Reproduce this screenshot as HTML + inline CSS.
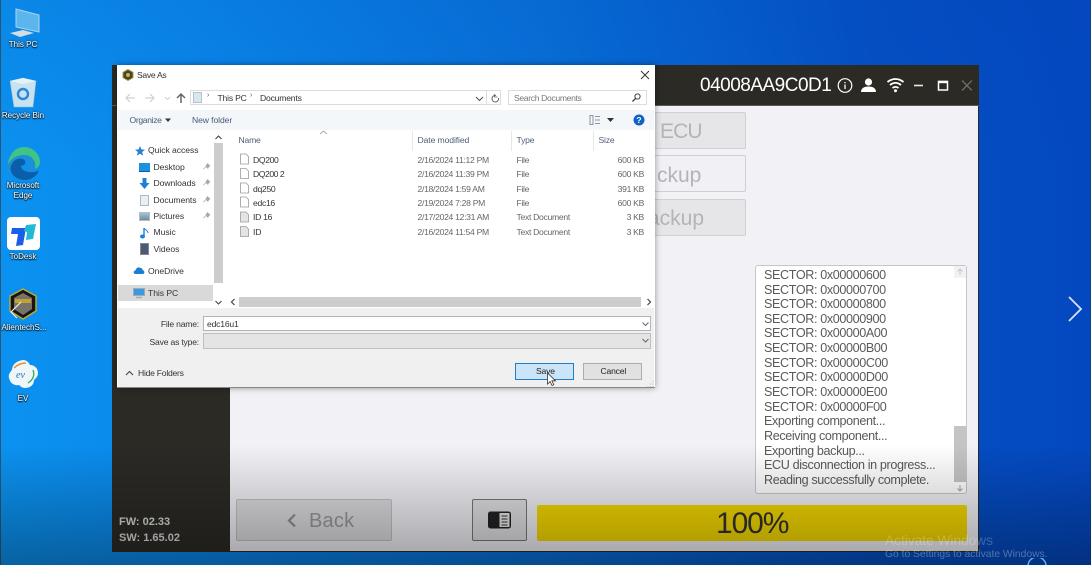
<!DOCTYPE html>
<html><head><meta charset="utf-8">
<style>
html,body{margin:0;padding:0;width:1091px;height:565px;overflow:hidden;background:#0a6ad8}
body{position:relative;font-family:"Liberation Sans",sans-serif}
#w{position:absolute;left:0;top:0;width:1091px;height:565px;overflow:hidden;filter:blur(.35px);background:linear-gradient(90deg,#0b92f0 0%,#0a86ea 20%,#0870d8 50%,#0450c4 80%,#0448c0 100%)}
.a{position:absolute;white-space:nowrap}
.d{font-size:8.6px;color:#444;letter-spacing:-.2px}
.g{color:#666;letter-spacing:-.3px}
.ic{position:absolute;left:0;width:46px;text-align:center;color:#fff;font-size:8px;line-height:10px;text-shadow:0 0 2px #000,0 1px 1px #000}
.l{position:absolute;left:764px;font-size:12.6px;color:#5a5a5a;line-height:14.6px;white-space:nowrap;letter-spacing:-.38px}
.btn{position:absolute;left:600px;width:146px;height:37px;border:1px solid #d0d0d4;border-radius:2px;background:#e6e6e9;color:#b4b4b8;font-size:21px;box-sizing:border-box}
.nav{position:absolute;font-size:8.6px;color:#333;white-space:nowrap;letter-spacing:-.05px}
</style></head><body><div id="w">
<div class="a" style="left:0;top:0;width:1091px;height:565px;background:linear-gradient(180deg,rgba(0,60,170,.12),rgba(0,0,0,0) 30%)"></div>
<div class="a" style="left:0;top:0;width:1px;height:565px;background:rgba(60,50,40,.6)"></div>
<div class="a" style="left:1090px;top:0;width:1px;height:565px;background:rgba(30,60,80,.5)"></div>

<!-- Desktop icons -->
<svg class="a" style="left:5px;top:6px" width="36" height="32" viewBox="0 0 36 32"><path d="M11 3l23 6v17l-23-5z" fill="#5cb6ee" stroke="#a8d4ee" stroke-width="1"/><path d="M5 27l13-3 11 3-14 4z" fill="#d4dce4"/></svg>
<div class="ic" style="top:40px">This PC</div>
<svg class="a" style="left:9px;top:76px" width="28" height="32" viewBox="0 0 28 32"><path d="M1 5l13-3 13 3-3 26H5z" fill="#c8e2f2" stroke="#8fbcd8" stroke-width=".6"/><path d="M1 5l13-3 13 3-13 3z" fill="#e6f2fa"/><circle cx="14" cy="18" r="5" fill="none" stroke="#2d86d8" stroke-width="2.4"/></svg>
<div class="ic" style="top:111px">Recycle Bin</div>
<svg class="a" style="left:6px;top:146px" width="36" height="36" viewBox="0 0 36 36"><path d="M1 18C2 7 10 1 18 1c10 0 16 8 16 15 0 5-4 8-9 8-4 0-6-2-6-4 4-1 5-3 4-5-2-3-8-3-12 1-4 3-6 8-3 13C3 28 0 23 1 18z" fill="#1d8fd6"/><path d="M18 1c10 0 16 8 16 15 0 3-2 6-5 7 2-8-4-15-12-14-6 0-12 4-15 9C3 8 10 1 18 1z" fill="#3fc488"/><path d="M7 16c4-4 10-5 12-1 1 2 0 4-4 5 0 4 5 7 13 6 2-.3 4-1 5-1-3 6-9 9-14 9-7 0-13-4-14-9-1-4 0-6 2-9z" fill="#0b5fa8"/></svg>
<div class="ic" style="top:181px">Microsoft<br>Edge</div>
<div class="a" style="left:7px;top:217px;width:33px;height:33px;background:#fff;border-radius:4px"></div>
<svg class="a" style="left:7px;top:217px" width="33" height="33" viewBox="0 0 33 33"><path d="M5 11h14l-3 17-7 1 2-12H4z" fill="#1a5fe8"/><path d="M19 8l10-1-3 15-7 1 1-8-3-1z" fill="#22b8d6"/></svg>
<div class="ic" style="top:252px">ToDesk</div>
<svg class="a" style="left:8px;top:288px" width="30" height="32" viewBox="0 0 30 32"><path d="M15 1l13 7v15l-13 8-13-8V8z" fill="#161616" stroke="#c9a92c" stroke-width="1.4"/><path d="M15 5l9 5v11l-9 6-9-6V10z" fill="#77736a"/><path d="M7 11h16v4H7z" fill="#c2a42c"/><path d="M13 14L3 24l6 6" fill="none" stroke="#eee" stroke-width="1.2"/></svg>
<div class="ic" style="top:323px;left:1px;color:#fff">AlientechS...</div>
<svg class="a" style="left:7px;top:359px" width="32" height="32" viewBox="0 0 32 32"><path d="M16 1c4 0 6 3 7 5 4 0 8 3 8 8 0 4-3 6-4 7 0 5-4 8-9 8-3 0-5-2-6-3-5 1-9-2-10-7-1-3 1-6 3-8 0-5 4-9 11-10z" fill="#eef6f8"/><path d="M7 9c4-4 9-5 12-5" fill="none" stroke="#e88b2c" stroke-width="1.4"/><path d="M26 11c2 5 0 10-5 13" fill="none" stroke="#38b068" stroke-width="1.4"/><text x="9" y="19" font-size="10" font-style="italic" fill="#2f6fc4" font-family="Liberation Serif,serif">ev</text></svg>
<div class="ic" style="top:394px">EV</div>

<!-- App window -->
<div class="a" style="left:112px;top:65px;width:867px;height:487px;background:#2b2a25"></div>
<div class="a" style="left:230px;top:106px;width:748px;height:445px;background:#f1f1f6"></div>
<div class="a" style="left:112px;top:105px;width:867px;height:1px;background:#5a5a55"></div>

<div class="a" style="left:700px;top:75px;font-size:19px;color:#fff;letter-spacing:-.5px">04008AA9C0D1</div>
<svg class="a" style="left:836px;top:76px" width="136" height="20" viewBox="0 0 136 20">
<circle cx="9" cy="9.500" r="6.800" fill="none" stroke="#fff" stroke-width="1.200"/><path d="M9 8.500v4.500M9 6v1.300" stroke="#fff" stroke-width="1.300"/>
<circle cx="32.500" cy="6" r="3.600" fill="#fff"/><path d="M25 16c0-4 3.500-5.500 7.500-5.500S40 12 40 16z" fill="#fff"/>
<path d="M51.500 6c5-4 11-4 16 0M54 9c3.500-2.800 7.500-2.800 11 0M56.500 12c2-1.500 4-1.500 6 0" fill="none" stroke="#fff" stroke-width="1.800"/><circle cx="59.500" cy="14.800" r="1.500" fill="#fff"/>
<path d="M78 9.500h9" stroke="#e8e8e8" stroke-width="1.600"/>
<rect x="102.500" y="5.500" width="9" height="8.500" fill="none" stroke="#fff" stroke-width="1.500"/><path d="M102 6h10" stroke="#fff" stroke-width="2.400"/>
<path d="M126 4.500l10 10M136 4.500l-10 10" stroke="#6e6e6a" stroke-width="1.300"/>
</svg>

<div class="btn" style="top:112px;background:#e6e6e9"><span class="a" style="left:59px;top:7px;letter-spacing:-.9px">ECU</span></div>
<div class="btn" style="top:155px;background:#f1f1f5"><span class="a" style="left:56px;top:8px">ckup</span></div>
<div class="btn" style="top:199px;background:#e6e6e9"><span class="a" style="left:47px;top:7px">ackup</span></div>

<!-- log -->
<div class="a" style="left:755px;top:265px;width:212px;height:229px;background:#fff;border:1px solid #c6c6ca;border-radius:3px;box-sizing:border-box"></div>
<div class="a" style="left:954px;top:266px;width:12px;height:12px;background:#f2f2f2"></div>
<div class="a" style="left:954px;top:426px;width:12px;height:56px;background:#c4c4c4"></div>
<svg class="a" style="left:956px;top:267px" width="8" height="9"><path d="M4 8V2M1.500 4.500L4 2l2.500 2.500" stroke="#c8c8c8" fill="none"/></svg>
<svg class="a" style="left:956px;top:484px" width="8" height="9"><path d="M4 1v6M1.500 4.500L4 7l2.500-2.500" stroke="#a8a8a8" fill="none"/></svg>
<div class="l" style="top:268px">SECTOR: 0x00000600</div>
<div class="l" style="top:283px">SECTOR: 0x00000700</div>
<div class="l" style="top:297px">SECTOR: 0x00000800</div>
<div class="l" style="top:312px">SECTOR: 0x00000900</div>
<div class="l" style="top:326px">SECTOR: 0x00000A00</div>
<div class="l" style="top:341px">SECTOR: 0x00000B00</div>
<div class="l" style="top:356px">SECTOR: 0x00000C00</div>
<div class="l" style="top:370px">SECTOR: 0x00000D00</div>
<div class="l" style="top:385px">SECTOR: 0x00000E00</div>
<div class="l" style="top:400px">SECTOR: 0x00000F00</div>
<div class="l" style="top:414px">Exporting component...</div>
<div class="l" style="top:429px">Receiving component...</div>
<div class="l" style="top:444px">Exporting backup...</div>
<div class="l" style="top:458px">ECU disconnection in progress...</div>
<div class="l" style="top:473px">Reading successfully complete.</div>

<!-- bottom bar -->
<div class="a" style="left:236px;top:499px;width:156px;height:42px;border:1px solid #c0c0c4;border-radius:2px;background:#dcdce0;box-sizing:border-box"></div>
<svg class="a" style="left:285px;top:512px" width="14" height="18"><path d="M10 2.500L4 8.500l6 6" fill="none" stroke="#8e8e92" stroke-width="2.200"/></svg>
<div class="a" style="left:309px;top:510px;font-size:20px;color:#98989c;letter-spacing:.2px">Back</div>
<div class="a" style="left:472px;top:499px;width:55px;height:42px;border:1px solid #777;border-radius:2px;background:#e0e0e4;box-sizing:border-box"></div>
<svg class="a" style="left:487px;top:510px" width="25" height="20"><rect x="1" y="1.500" width="23" height="17" rx="2.500" fill="#222"/><rect x="12.500" y="3" width="10" height="14" fill="#e8e8e8"/><path d="M14.500 6h6M14.500 9h6M14.500 12h6M14.500 15h6" stroke="#333"/></svg>
<div class="a" style="left:537px;top:505px;width:430px;height:36px;background:#f4d700;border-radius:2px"></div>
<div class="a" style="left:716px;top:505px;font-size:30px;color:#333;line-height:37px;letter-spacing:-1.100px">100%</div>

<div class="a" style="left:119px;top:514px;font-size:11px;font-weight:700;color:#d8d8d8;line-height:16px">FW: 02.33<br>SW: 1.65.02</div>

<!-- bottom video shade -->
<div class="a" style="left:0;top:445px;width:1091px;height:120px;background:linear-gradient(180deg,rgba(0,0,0,0) 0%,rgba(0,0,0,.33) 100%)"></div>

<div class="a" style="left:885px;top:533px;font-size:13.700px;color:#fff;opacity:.22">Activate Windows</div>
<div class="a" style="left:885px;top:549px;font-size:10.300px;color:#fff;opacity:.3">Go to Settings to activate Windows.</div>
<svg class="a" style="left:1026px;top:558px" width="22" height="7"><path d="M2 8a9 9 0 0 1 18 0" fill="none" stroke="#5ab4f4" stroke-width="1.500"/></svg>
<svg class="a" style="left:1066px;top:294px" width="18" height="30"><path d="M3 3l12 12L3 27" fill="none" stroke="#d8e2f4" stroke-width="1.800"/></svg>

<!-- Dialog -->
<div class="a" style="left:117px;top:65px;width:538px;height:323px;background:#fff;box-shadow:0 0 6px rgba(0,0,0,.4);border-bottom:1px solid #888;box-sizing:border-box"></div>
<svg class="a" style="left:122px;top:69px" width="12" height="12"><path d="M6 .5l5 2.800v5.400L6 11.500 1 8.700V3.300z" fill="#4a4420" stroke="#a8984c"/><circle cx="6" cy="6" r="2" fill="#c4b25c"/></svg>
<div class="a d" style="left:137px;top:70px;color:#333;letter-spacing:-.3px">Save As</div>
<svg class="a" style="left:640px;top:70px" width="10" height="10"><path d="M1 1l8 8M9 1l-8 8" stroke="#333" stroke-width="1"/></svg>

<svg class="a" style="left:124px;top:91px" width="66" height="14"><path d="M2 7h9M6 3L2 7l4 4M21 7h9M26 3l4 4-4 4" fill="none" stroke="#d0d0d0" stroke-width="1.200"/><path d="M41 6l2.500 2.500L46 6" fill="none" stroke="#d0d0d0"/><path d="M57 12V3M53 7l4-4 4 4" fill="none" stroke="#666" stroke-width="1.500"/></svg>
<div class="a" style="left:190px;top:90px;width:311px;height:15px;border:1px solid #dcdcdc;box-sizing:border-box"></div>
<div class="a" style="left:486px;top:90px;width:15px;height:15px;border-left:1px solid #dcdcdc;box-sizing:border-box"></div>
<div class="a" style="left:193px;top:92px;width:9px;height:11px;background:#d8e6f0;border:1px solid #b8c0c8;box-sizing:border-box"></div>
<div class="a d" style="left:207px;top:92px;color:#555;font-size:7px">›</div>
<div class="a d" style="left:217.500px;top:92.500px;color:#333">This PC</div>
<div class="a d" style="left:250px;top:92px;color:#555;font-size:7px">›</div>
<div class="a d" style="left:260px;top:92.500px;color:#333">Documents</div>
<svg class="a" style="left:474px;top:94px" width="28" height="9"><path d="M2 3l3.500 3.500L9 3" fill="none" stroke="#555" stroke-width="1.100"/><path d="M22 1.500a3.300 3.300 0 1 0 2.500 2.500" fill="none" stroke="#666"/><path d="M20.500 0v3h3" fill="none" stroke="#666" stroke-width=".8"/></svg>
<div class="a" style="left:508px;top:90px;width:139px;height:15px;border:1px solid #dcdcdc;box-sizing:border-box"></div>
<div class="a d" style="left:514px;top:92.500px;color:#777;letter-spacing:-.35px">Search Documents</div>
<svg class="a" style="left:631px;top:92px" width="11" height="11"><circle cx="6.500" cy="4.500" r="2.600" fill="none" stroke="#444"/><path d="M4.500 6.500L1.500 9.500" stroke="#444" stroke-width="1.300"/></svg>

<div class="a" style="left:118px;top:110px;width:536px;height:20px;background:#f4f7fa"></div>
<div class="a d" style="left:129.500px;top:115px;color:#455a78;letter-spacing:-.35px">Organize</div>
<svg class="a" style="left:165px;top:118px" width="7" height="5"><path d="M0 .500h6L3 4z" fill="#333"/></svg>
<div class="a d" style="left:192px;top:115px;color:#455a78;letter-spacing:-.1px">New folder</div>
<svg class="a" style="left:589px;top:115px" width="26" height="10"><path d="M1 .500h3v9H1zM6 1.500h5M6 5h5M6 8.500h5" fill="none" stroke="#8a96a4"/><path d="M18 3h7l-3.500 4z" fill="#333"/></svg>
<svg class="a" style="left:633px;top:114px" width="12" height="12"><circle cx="6" cy="6" r="5.500" fill="#0e63c4"/><text x="6" y="9" font-size="8.500" font-weight="700" fill="#fff" text-anchor="middle" font-family="Liberation Sans,sans-serif">?</text></svg>

<!-- Nav pane -->
<div class="a" style="left:213px;top:131px;width:11px;height:180px;background:#fff"></div>
<div class="a" style="left:214px;top:143px;width:9px;height:140px;background:#cdcdcd"></div>
<svg class="a" style="left:214px;top:134px" width="9" height="8"><path d="M1.500 5L4.500 2l3 3" fill="none" stroke="#444" stroke-width="1.100"/></svg>
<svg class="a" style="left:214px;top:298px" width="9" height="8"><path d="M1.500 3l3 3 3-3" fill="none" stroke="#444" stroke-width="1.100"/></svg>
<div class="a" style="left:118px;top:285px;width:95px;height:16px;background:#d9d9d9"></div>

<svg class="a" style="left:135px;top:146px" width="10" height="10"><path d="M5 0l1.400 3.400L10 3.700 7.200 6l.9 3.600L5 7.700 1.900 9.600 2.800 6 0 3.700l3.600-.3z" fill="#2b7fd4"/></svg>
<div class="nav" style="left:148px;top:145px">Quick access</div>
<div class="a" style="left:139px;top:163px;width:11px;height:8px;background:#1d8fe0;border-bottom:1px solid #0b5fa8"></div>
<div class="nav" style="left:153.500px;top:162px">Desktop</div>
<svg class="a" style="left:139px;top:178px" width="11" height="11"><path d="M3.500 0h4v5h3L5.500 11 .5 5h3z" fill="#1d7fd8"/></svg>
<div class="nav" style="left:153.500px;top:178px">Downloads</div>
<div class="a" style="left:140px;top:195px;width:9px;height:11px;background:#e8f0f6;border:1px solid #b0b8c0;box-sizing:border-box"></div>
<div class="nav" style="left:153.500px;top:195px">Documents</div>
<div class="a" style="left:139px;top:212px;width:11px;height:9px;background:linear-gradient(#9cc4de,#6f8ca0);border:1px solid #bbb;box-sizing:border-box"></div>
<div class="nav" style="left:153.500px;top:211px">Pictures</div>
<svg class="a" style="left:140px;top:227px" width="9" height="12"><path d="M4 1v8" stroke="#1d7fd8" stroke-width="1.400"/><path d="M4 1c1 2 4 2 4 5" fill="none" stroke="#1d7fd8"/><ellipse cx="2.500" cy="9.500" rx="2.500" ry="2" fill="#1d7fd8"/></svg>
<div class="nav" style="left:153.500px;top:227px">Music</div>
<div class="a" style="left:140px;top:243px;width:9px;height:12px;background:#4a5a78;border:1px solid #888;box-sizing:border-box"></div>
<div class="nav" style="left:153.500px;top:244px">Videos</div>
<svg class="a" style="left:133px;top:266px" width="12" height="8"><path d="M2.500 8C0 8 0 4.500 2.500 4.500 3 2 5.500.5 7.500 2c1.500 0 2 1 2 2C12 4.500 12 8 9.500 8z" fill="#1a7fd0"/></svg>
<div class="nav" style="left:148px;top:266px">OneDrive</div>
<svg class="a" style="left:133px;top:288px" width="12" height="11"><rect x=".5" y=".5" width="11" height="7" fill="#3a9ae0" stroke="#9ab"/><path d="M3 9.500h6" stroke="#aaa" stroke-width="1.500"/></svg>
<div class="nav" style="left:148px;top:288px">This PC</div>
<svg class="a" style="left:203px;top:163px" width="9" height="64"><g fill="#aaa"><path d="M4.500 0l3 3-1.500 1L5 6 3 4 .5 6.500 0 6l2.500-2.500L3 2z"/><path d="M4.500 16l3 3-1.500 1L5 22 3 20 .5 22.500 0 22l2.500-2.500L3 18z"/><path d="M4.500 33l3 3-1.500 1L5 39 3 37 .5 39.500 0 39l2.500-2.500L3 35z"/><path d="M4.500 49l3 3-1.500 1L5 55 3 53 .5 55.500 0 55l2.500-2.500L3 51z"/></g></svg>

<!-- File list -->
<svg class="a" style="left:319px;top:130px" width="9" height="5"><path d="M1 4l3.500-3L8 4" fill="none" stroke="#aaa"/></svg>
<div class="a d" style="left:238.500px;top:135px;color:#4e6078">Name</div>
<div class="a d" style="left:417.500px;top:135px;color:#4e6078;letter-spacing:-.1px">Date modified</div>
<div class="a d" style="left:516.500px;top:135px;color:#4e6078">Type</div>
<div class="a d" style="left:598.500px;top:135px;color:#4e6078">Size</div>
<div class="a" style="left:412px;top:131px;width:1px;height:20px;background:#e4e8ec"></div>
<div class="a" style="left:511px;top:131px;width:1px;height:20px;background:#e4e8ec"></div>
<div class="a" style="left:593px;top:131px;width:1px;height:20px;background:#e4e8ec"></div>

<svg class="a" style="left:239px;top:153px" width="11" height="86"><g fill="#fff" stroke="#9a9a9a" stroke-width=".8"><path d="M1.500 1h5.500l2.500 2.500v7.500h-8z"/><path d="M1.500 15.500h5.500l2.500 2.500v7.500h-8z"/><path d="M1.500 30h5.500l2.500 2.500v7.500h-8z"/><path d="M1.500 44h5.500l2.500 2.500v7.500h-8z"/><path d="M1.500 59h5.500l2.500 2.500v7.500h-8z" fill="#e4e4e4"/><path d="M1.500 73.500h5.500l2.500 2.500v7.500h-8z" fill="#e4e4e4"/></g></svg>

<div class="a d" style="left:253px;top:154.500px;color:#333;letter-spacing:-.35px">DQ200</div>
<div class="a d" style="left:253px;top:169px;color:#333;letter-spacing:-.45px">DQ200 2</div>
<div class="a d" style="left:253px;top:183.500px;color:#333;letter-spacing:-.3px">dq250</div>
<div class="a d" style="left:253px;top:198px;color:#333;letter-spacing:-.3px">edc16</div>
<div class="a d" style="left:253px;top:212px;color:#333;letter-spacing:-.3px">ID 16</div>
<div class="a d" style="left:253px;top:226.500px;color:#333">ID</div>

<div class="a d g" style="left:417.500px;top:154.500px">2/16/2024 11:12 PM</div>
<div class="a d g" style="left:417.500px;top:169px">2/16/2024 11:39 PM</div>
<div class="a d g" style="left:417.500px;top:183.500px">2/18/2024 1:59 AM</div>
<div class="a d g" style="left:417.500px;top:198px">2/19/2024 7:28 PM</div>
<div class="a d g" style="left:417.500px;top:212px">2/17/2024 12:31 AM</div>
<div class="a d g" style="left:417.500px;top:226.500px">2/16/2024 11:54 PM</div>

<div class="a d g" style="left:516.500px;top:154.500px">File</div>
<div class="a d g" style="left:516.500px;top:169px">File</div>
<div class="a d g" style="left:516.500px;top:183.500px">File</div>
<div class="a d g" style="left:516.500px;top:198px">File</div>
<div class="a d g" style="left:516.500px;top:212px">Text Document</div>
<div class="a d g" style="left:516.500px;top:226.500px">Text Document</div>

<div class="a d g" style="right:447px;top:154.500px">600 KB</div>
<div class="a d g" style="right:447px;top:169px">600 KB</div>
<div class="a d g" style="right:447px;top:183.500px">391 KB</div>
<div class="a d g" style="right:447px;top:198px">600 KB</div>
<div class="a d g" style="right:447px;top:212px">3 KB</div>
<div class="a d g" style="right:447px;top:226.500px">3 KB</div>

<!-- h scrollbar -->
<div class="a" style="left:239px;top:297px;width:402px;height:10px;background:#cdcdcd"></div>
<svg class="a" style="left:229px;top:298px" width="8" height="8"><path d="M5.500 1L2.500 4l3 3" fill="none" stroke="#444" stroke-width="1.200"/></svg>
<svg class="a" style="left:645px;top:298px" width="8" height="8"><path d="M2.500 1l3 3-3 3" fill="none" stroke="#444" stroke-width="1.200"/></svg>

<!-- footer -->
<div class="a" style="left:118px;top:308px;width:536px;height:79px;background:#f0f0f0"></div>
<div class="a d" style="right:892px;top:319px;color:#333">File name:</div>
<div class="a d" style="right:892px;top:336.500px;color:#333">Save as type:</div>
<div class="a" style="left:203px;top:316px;width:448px;height:15px;background:#fff;border:1px solid #aeb4b8;box-sizing:border-box"></div>
<div class="a d" style="left:207px;top:318.500px;color:#333">edc16u1</div>
<div class="a" style="left:203px;top:333px;width:448px;height:16px;background:#e4e4e4;border:1px solid #bcc0c4;box-sizing:border-box"></div>
<svg class="a" style="left:641px;top:320px" width="9" height="26"><path d="M1.500 2.500L4.500 5.500l3-3M1.500 19l3 3 3-3" fill="none" stroke="#666"/></svg>
<svg class="a" style="left:125px;top:370px" width="9" height="7"><path d="M1 5l3.500-3.500L8 5" fill="none" stroke="#444" stroke-width="1.100"/></svg>
<div class="a d" style="left:138px;top:368px;color:#333;letter-spacing:-.25px">Hide Folders</div>
<div class="a" style="left:515px;top:363px;width:59px;height:17px;background:#cce4f7;border:1px solid #1f7fc8;box-sizing:border-box"></div>
<div class="a d" style="left:536px;top:366px;color:#222">Save</div>
<div class="a" style="left:583px;top:363px;width:59px;height:17px;background:#e1e1e1;border:1px solid #adadad;box-sizing:border-box"></div>
<div class="a d" style="left:600.500px;top:366px;color:#222">Cancel</div>
<svg class="a" style="left:546px;top:372px" width="11" height="15"><path d="M1.500 1v11l2.600-2.500 1.900 4 1.800-.8-1.900-3.900H9.500z" fill="#fff" stroke="#333" stroke-width=".8"/></svg>
<svg class="a" style="left:647px;top:380px" width="7" height="7"><path d="M6 1v1M6 3.500v1M3.500 3.500v1M6 6v1M3.500 6v1M1 6v1" stroke="#bbb"/></svg>
</div></body></html>
